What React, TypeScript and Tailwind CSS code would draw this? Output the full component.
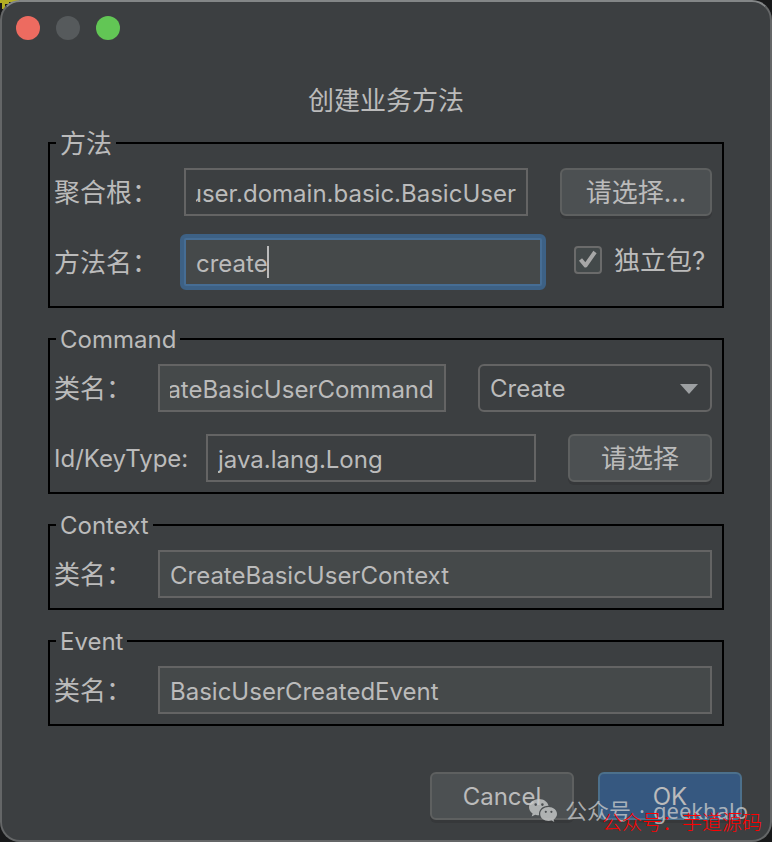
import { useEffect, useRef, useState } from 'react';
import type { ReactNode } from 'react';
import clsx from 'clsx';

interface GroupProps {
  title: string;
  children: ReactNode;
  className?: string;
}

const Group = ({ title, children, className }: GroupProps) => (
  <fieldset className={clsx('min-w-0 border-2 border-black pl-1 pr-2.5 pt-2.5', className)}>
    <legend className="ml-0.5 h-[30px] px-1 leading-8">{title}</legend>
    <div className="flex flex-col gap-[22px] text-[26px]">{children}</div>
  </fieldset>
);

interface TextFieldProps {
  id: string;
  value: string;
  onChange?: (value: string) => void;
  readOnly?: boolean;
}

const TextField = ({ id, value, onChange, readOnly }: TextFieldProps) => {
  const inputRef = useRef<HTMLInputElement>(null);

  // Keep the end of a long name in view
  useEffect(() => {
    if (inputRef.current) {
      inputRef.current.scrollLeft = inputRef.current.scrollWidth;
    }
  }, []);

  return (
    <input
      ref={inputRef}
      id={id}
      type="text"
      value={value}
      readOnly={readOnly}
      onChange={(e) => onChange?.(e.target.value)}
      className={clsx(
        'h-12 w-full min-w-0 flex-1 border-2 border-[#646464] px-2.5 pt-0.5 text-2xl outline-none',
        readOnly ? 'bg-[#3c3f41]' : 'bg-[#45494a]'
      )}
    />
  );
};

const MethodNameField = ({ id }: { id: string }) => {
  const inputRef = useRef<HTMLInputElement>(null);
  const [value, setValue] = useState('create');
  const [textWidth, setTextWidth] = useState(0);

  // Measure the text so the wide caret can sit right behind it
  useEffect(() => {
    const ctx = document.createElement('canvas').getContext('2d');
    if (!ctx || !inputRef.current) return;
    ctx.font = getComputedStyle(inputRef.current).font;
    setTextWidth(Math.floor(ctx.measureText(value).width));
  }, [value]);

  return (
    <div className="relative flex-1 rounded-xs outline-4 outline-[#3d6185]">
      <input
        ref={inputRef}
        id={id}
        type="text"
        value={value}
        onChange={(e) => setValue(e.target.value)}
        className="block h-12 w-full border-2 border-[#466d94] bg-[#45494a] px-2.5 pt-0.5 text-2xl caret-transparent outline-none"
      />
      <span
        className="absolute top-2 ml-3 h-8 w-0.5 bg-[#bbbbbb]"
        style={{ left: textWidth }}
      />
    </div>
  );
};

interface ButtonProps {
  children: ReactNode;
  primary?: boolean;
  className?: string;
}

const Button = ({ children, primary, className }: ButtonProps) => (
  <button
    type="button"
    className={clsx(
      'h-12 shrink-0 rounded-md border-2 pt-0.5 shadow-[0_3px_0_#36383a]',
      primary ? 'border-[#4c708c] bg-[#365880]' : 'border-[#5e6060] bg-[#4c5052]',
      className
    )}
  >
    {children}
  </button>
);

const WechatIcon = () => (
  <svg className="h-6 w-7" viewBox="0 0 28 24" fill="currentColor">
    <path
      fillRule="evenodd"
      d="M10 1C4.500 1 0 4.600 0 9.200c0 2.600 1.400 4.800 3.600 6.300L2.700 18.500l3.500-1.800c1.200.4 2.500.6 3.900.6C9.300 11.900 13.600 7.700 19.600 7.800 18.700 3.900 14.800 1 10 1zM6.700 5.300a1.300 1.300 0 1 1 0 2.600 1.300 1.300 0 0 1 0-2.600zm6.700 0a1.300 1.300 0 1 1 0 2.600 1.300 1.300 0 0 1 0-2.600z"
    />
    <path
      fillRule="evenodd"
      d="M19.600 9c-4.700 0-8.400 3.100-8.400 7s3.700 7 8.400 7c1.100 0 2.100-.2 3-.5l2.700 1.400-.7-2.400c2-1.300 3.400-3.200 3.400-5.500 0-3.900-3.700-7-8.400-7zm-2.800 3.700a1.100 1.100 0 1 1 0 2.200 1.100 1.100 0 0 1 0-2.200zm5.600 0a1.100 1.100 0 1 1 0 2.200 1.100 1.100 0 0 1 0-2.200z"
    />
  </svg>
);

const App = () => {
  const [commandName, setCommandName] = useState('CreateBasicUserCommand');
  const [contextName, setContextName] = useState('CreateBasicUserContext');
  const [eventName, setEventName] = useState('BasicUserCreatedEvent');

  return (
    <div className="relative min-h-screen bg-[#18191a]">
      {/* Editor text peeking out behind the window corner */}
      <svg className="absolute left-0 top-0 h-3 w-5" viewBox="0 0 20 12" fill="#b3ae24">
        <path d="M0 0h19v2H9v2H5v5H2V3H0z" />
      </svg>

      <main className="relative flex min-h-screen flex-col rounded-[20px] border-2 border-[#646667] border-t-[#838687] bg-[#3c3f41] font-['Inter','Noto_Sans_CJK_SC',sans-serif] text-[26px] leading-8 text-[#bbbbbb]">
        <div className="flex gap-4 px-3.5 pt-3.5">
          <button type="button" aria-label="Close" className="size-6 rounded-full bg-[#ed6b60]" />
          <button type="button" aria-label="Minimize" className="size-6 rounded-full bg-[#565a5c]" />
          <button type="button" aria-label="Zoom" className="size-6 rounded-full bg-[#62c655]" />
        </div>

        <form className="flex flex-col gap-4 px-[46px] pt-11">
          <h1 className="-mb-1.5 text-center leading-[34px]">创建业务方法</h1>

          <Group title="方法" className="pb-5">
            <div className="flex items-center">
              <label htmlFor="root" className="w-[130px] shrink-0 pt-0.5">聚合根：</label>
              <TextField id="root" value="com.geekhalo.user.domain.basic.BasicUser" readOnly />
              <Button className="ml-8 w-[152px]">请选择...</Button>
            </div>
            <div className="flex items-center">
              <label htmlFor="method" className="w-[130px] shrink-0 pt-0.5">方法名：</label>
              <MethodNameField id="method" />
              <label className="ml-8 flex w-[138px] shrink-0 items-center gap-3 pb-1">
                <span className="relative flex size-7 shrink-0">
                  <input
                    type="checkbox"
                    defaultChecked
                    className="peer size-7 appearance-none rounded-sm border-2 border-[#6b6b6b] bg-[#43494a]"
                  />
                  <svg
                    className="pointer-events-none absolute inset-0 hidden size-7 peer-checked:block"
                    viewBox="0 0 28 28"
                    fill="none"
                    stroke="#a7a7a7"
                    strokeWidth="4"
                    strokeLinejoin="round"
                  >
                    <path d="M6.500 13.500l5 6L21 6" />
                  </svg>
                </span>
                <span className="whitespace-nowrap pt-0.5">独立包?</span>
              </label>
            </div>
          </Group>

          <Group title="Command" className="pb-2.5 text-2xl/8">
            <div className="flex items-center">
              <label htmlFor="command" className="w-[104px] shrink-0 pt-0.5">类名：</label>
              <TextField id="command" value={commandName} onChange={setCommandName} />
              <div className="relative ml-8 w-[234px] shrink-0">
                <select
                  aria-label="Command type"
                  defaultValue="Create"
                  className="block h-12 w-full appearance-none rounded-md border-2 border-[#646464] bg-[#3c3f41] px-2.5 pt-0.5 text-2xl"
                >
                  <option>Create</option>
                  <option>Update</option>
                </select>
                <svg
                  className="pointer-events-none absolute right-3.5 top-5 h-2.5 w-[18px]"
                  viewBox="0 0 18 10"
                  fill="#9da0a2"
                >
                  <path d="M0 0h18L9 10z" />
                </svg>
              </div>
            </div>
            <div className="flex items-center">
              <label htmlFor="key-type" className="w-[152px] shrink-0 pt-0.5 text-2xl">Id/KeyType:</label>
              <TextField id="key-type" value="java.lang.Long" readOnly />
              <Button className="ml-8 w-36">请选择</Button>
            </div>
          </Group>

          <Group title="Context" className="pb-2.5 text-2xl/8">
            <div className="flex items-center">
              <label htmlFor="context" className="w-[104px] shrink-0 pt-0.5">类名：</label>
              <TextField id="context" value={contextName} onChange={setContextName} />
            </div>
          </Group>

          <Group title="Event" className="pb-2.5 text-2xl/8">
            <div className="flex items-center">
              <label htmlFor="event" className="w-[104px] shrink-0 pt-0.5">类名：</label>
              <TextField id="event" value={eventName} onChange={setEventName} />
            </div>
          </Group>
        </form>

        <div className="mt-auto flex justify-end gap-6 px-7 pb-5 text-2xl">
          <Button className="w-36">Cancel</Button>
          <Button primary className="w-36">OK</Button>
        </div>

        {/* Watermarks */}
        <div className="pointer-events-none absolute bottom-3.5 right-[22px] flex items-center gap-2 whitespace-nowrap font-['Noto_Sans','Noto_Sans_CJK_SC',sans-serif] text-[22px] text-[#c8cacb]/80">
          <WechatIcon />
          <span>公众号</span>
          <span>·</span>
          <span>geekhalo</span>
        </div>
        <div className="pointer-events-none absolute bottom-1 right-2 whitespace-nowrap font-['Noto_Sans_CJK_SC',serif] text-xl font-light text-[#ff0000]">
          公众号：芋道源码
        </div>
      </main>
    </div>
  );
};

export default App;
